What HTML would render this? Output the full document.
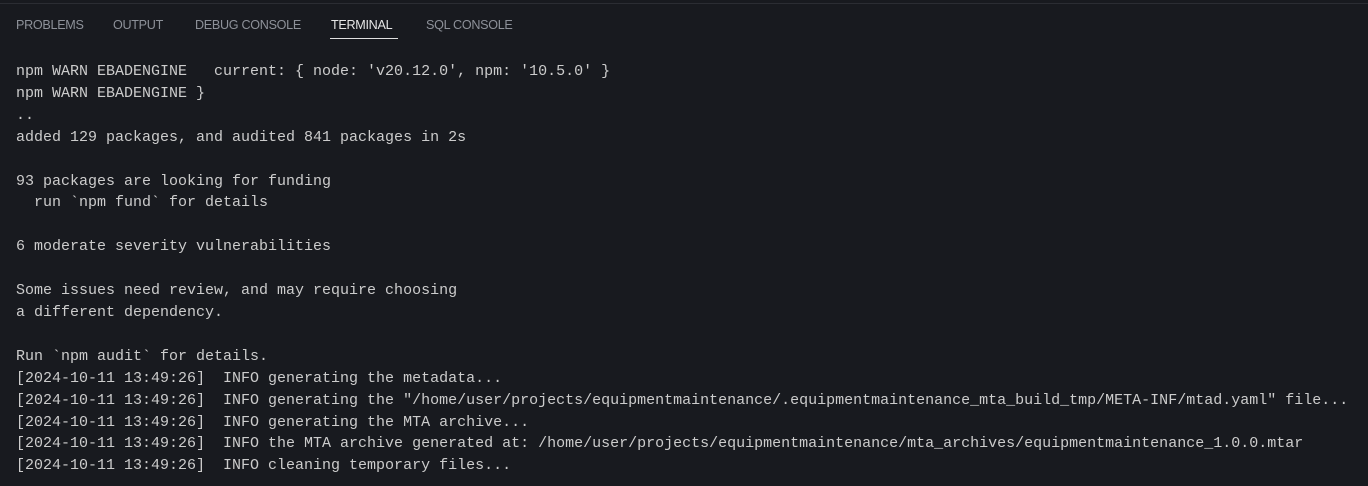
<!DOCTYPE html>
<html><head><style>
html,body{margin:0;padding:0;background:#181a1f;width:1368px;height:486px;overflow:hidden}
.top{position:absolute;left:0;top:0;width:1368px;height:3px;background:#181a1f;border-bottom:1px solid #2b2d33}
.tab{position:absolute;top:18px;font:12.6px "Liberation Sans",sans-serif;color:#8d9199;white-space:nowrap;letter-spacing:-0.3px}
.act{color:#e6e6e6}
.ul{position:absolute;left:330px;top:38px;width:68px;height:1px;background:#e0e0e0}
pre{position:absolute;left:16px;top:61px;margin:0;font:15px/21.9px "Liberation Mono",monospace;color:#cccccc}
</style></head><body>
<div class="top"></div>
<div class="tab" style="left:16px">PROBLEMS</div>
<div class="tab" style="left:113px">OUTPUT</div>
<div class="tab" style="left:195px">DEBUG CONSOLE</div>
<div class="tab act" style="left:331px">TERMINAL</div>
<div class="tab" style="left:426px">SQL CONSOLE</div>
<div class="ul"></div>
<pre>npm WARN EBADENGINE   current: { node: 'v20.12.0', npm: '10.5.0' }
npm WARN EBADENGINE }
..
added 129 packages, and audited 841 packages in 2s

93 packages are looking for funding
  run `npm fund` for details

6 moderate severity vulnerabilities

Some issues need review, and may require choosing
a different dependency.

Run `npm audit` for details.
[2024-10-11 13:49:26]  INFO generating the metadata...
[2024-10-11 13:49:26]  INFO generating the "/home/user/projects/equipmentmaintenance/.equipmentmaintenance_mta_build_tmp/META-INF/mtad.yaml" file...
[2024-10-11 13:49:26]  INFO generating the MTA archive...
[2024-10-11 13:49:26]  INFO the MTA archive generated at: /home/user/projects/equipmentmaintenance/mta_archives/equipmentmaintenance_1.0.0.mtar
[2024-10-11 13:49:26]  INFO cleaning temporary files...</pre>
</body></html>
